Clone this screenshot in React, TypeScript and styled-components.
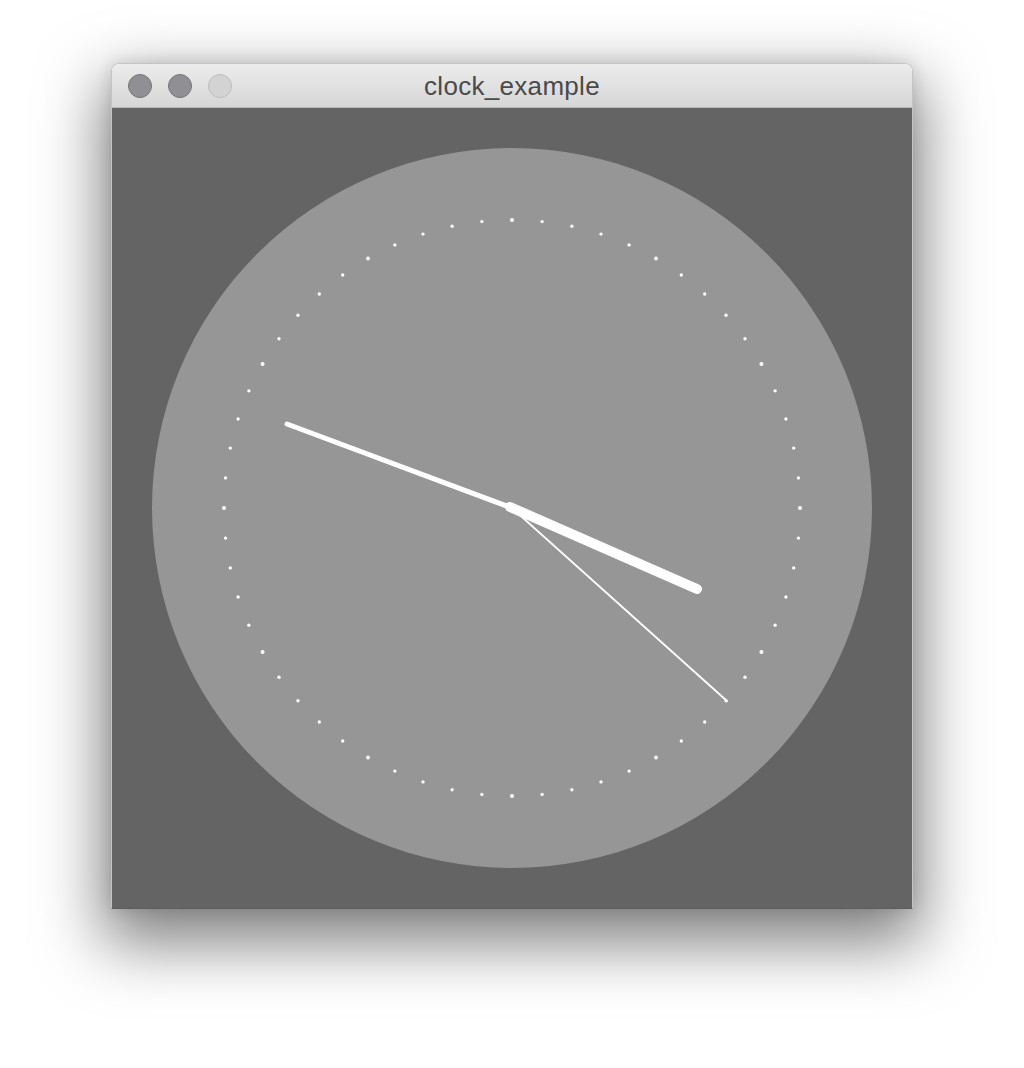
import React from "react";
import styled, { createGlobalStyle } from "styled-components";

const GlobalStyle = createGlobalStyle`
  html, body {
    margin: 0;
    padding: 0;
    background: #ffffff;
  }
  #root {
    width: 1024px;
    height: 1068px;
  }
`;

const Desktop = styled.div`
  width: 1024px;
  height: 1068px;
  padding: 63px 0 0 111px;
  box-sizing: border-box;
`;

const Window = styled.div`
  width: 800px;
  display: flex;
  flex-direction: column;
  border: 1px solid #c4c4c4;
  border-bottom-color: #5e5e5e;
  border-radius: 8px 8px 0 0;
  overflow: hidden;
  box-shadow: 0 26px 64px 8px rgba(0, 0, 0, 0.5), 0 0 16px rgba(0, 0, 0, 0.12);
`;

const TitleBar = styled.div`
  height: 43px;
  display: flex;
  align-items: center;
  position: relative;
  background: linear-gradient(to bottom, #ececec, #d6d6d6);
  border-bottom: 1px solid #b6b6b6;
  padding-left: 16px;
  gap: 16px;
`;

const Light = styled.div<{ $off?: boolean }>`
  width: 22px;
  height: 22px;
  border-radius: 50%;
  background: ${(p) => (p.$off ? "#d3d3d3" : "#8f8f94")};
  border: 1px solid ${(p) => (p.$off ? "#bdbdbd" : "#76767a")};
`;

const Title = styled.div`
  position: absolute;
  left: 0;
  right: 0;
  top: 2px;
  bottom: 0;
  display: flex;
  align-items: center;
  justify-content: center;
  font-family: "Liberation Sans", Arial, sans-serif;
  font-size: 26px;
  letter-spacing: 0.3px;
  color: #4a4a4a;
  pointer-events: none;
`;

const Content = styled.div`
  width: 800px;
  height: 800px;
  background: #646464;
`;

const CENTER = 400;
const TICK_R = 288;

const ticks = Array.from({ length: 60 }, (_, i) => {
  const a = (i * 6 * Math.PI) / 180;
  return {
    x: CENTER + TICK_R * Math.sin(a),
    y: CENTER - TICK_R * Math.cos(a),
    hour: i % 5 === 0,
  };
});

const Clock = () => (
  <svg width="800" height="800" viewBox="0 0 800 800">
    <circle cx={CENTER} cy={CENTER} r={360} fill="#969696" />
    {ticks.map((t, i) => (
      <circle key={i} cx={t.x} cy={t.y} r={t.hour ? 2 : 1.7} fill="#ffffff" />
    ))}
    {/* minute hand */}
    <line x1={CENTER} y1={CENTER} x2={175} y2={316} stroke="#fff" strokeWidth={5} strokeLinecap="round" />
    {/* hour hand */}
    <line x1={CENTER - 2} y1={CENTER - 1} x2={585} y2={481} stroke="#fff" strokeWidth={10} strokeLinecap="round" />
    {/* second hand */}
    <line x1={CENTER} y1={CENTER} x2={615} y2={593} stroke="#fff" strokeWidth={1.8} strokeLinecap="round" />
  </svg>
);

export default function App() {
  return (
    <>
      <GlobalStyle />
      <Desktop>
        <Window>
          <TitleBar>
            <Light />
            <Light />
            <Light $off />
            <Title>clock_example</Title>
          </TitleBar>
          <Content>
            <Clock />
          </Content>
        </Window>
      </Desktop>
    </>
  );
}
